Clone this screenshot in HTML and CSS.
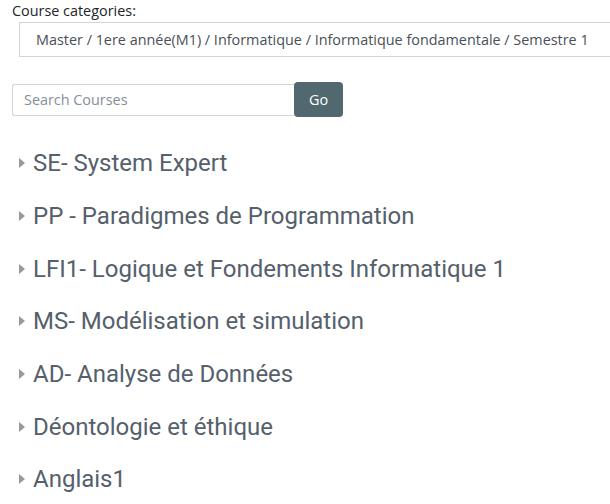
FILE: index.html
```html
<!DOCTYPE html>
<html>
<head>
<meta charset="utf-8">
<link rel="stylesheet" href="styles.css">
</head>
<body>
<div class="page">
  <div class="categories">
    <label class="cat-label">Course categories:</label>
    <div class="select">Master / 1ere année(M1) / Informatique / Informatique fondamentale / Semestre 1</div>
  </div>
  <form class="search">
    <input class="search-input" type="text" placeholder="Search Courses">
    <button class="go" type="button">Go</button>
  </form>
  <ul class="courses">
    <li class="course"><span class="caret"></span><span class="name">SE- System Expert</span></li>
    <li class="course"><span class="caret"></span><span class="name">PP - Paradigmes de Programmation</span></li>
    <li class="course"><span class="caret"></span><span class="name">LFI1- Logique et Fondements Informatique 1</span></li>
    <li class="course"><span class="caret"></span><span class="name">MS- Modélisation et simulation</span></li>
    <li class="course"><span class="caret"></span><span class="name">AD- Analyse de Données</span></li>
    <li class="course"><span class="caret"></span><span class="name">Déontologie et éthique</span></li>
    <li class="course"><span class="caret"></span><span class="name">Anglais1</span></li>
  </ul>
</div>
</body>
</html>
```
FILE: styles.css
```css
html, body {
  margin: 0;
  padding: 0;
  background: #fff;
  overflow: hidden;
}
body {
  font-family: "Open Sans", "Liberation Sans", sans-serif;
  color: #212529;
}
.page {
  padding: 2px 0 0 12px;
}
.categories {
  display: flex;
  flex-direction: column;
}
.cat-label {
  font-size: 14.4px;
  line-height: 18px;
  color: #212529;
}
.select {
  margin: 2px 0 0 7px;
  height: 33px;
  border: 1px solid #ced4da;
  border-right: none;
  box-sizing: content-box;
  display: flex;
  align-items: center;
  padding-left: 16px;
  font-size: 14.4px;
  color: #495057;
  white-space: nowrap;
  width: 700px;
}
.search {
  display: flex;
  align-items: center;
  margin: 25px 0 0 0;
}
.search-input {
  width: 282px;
  height: 32px;
  box-sizing: border-box;
  border: 1px solid #ced4da;
  border-right: none;
  border-radius: 3px 0 0 3px;
  padding: 0 11px;
  font-family: "Open Sans", "Liberation Sans", sans-serif;
  font-size: 14.4px;
  color: #495057;
  outline: none;
}
.search-input::placeholder {
  color: #868e96;
  opacity: 1;
}
.go {
  width: 49px;
  height: 35px;
  border: none;
  border-radius: 4px;
  background: #516870;
  color: #fff;
  font-family: "Open Sans", "Liberation Sans", sans-serif;
  font-size: 14.4px;
  padding: 0;
}
.courses {
  list-style: none;
  margin: 20px 0 0 0;
  padding: 0 0 0 7px;
}
.course {
  display: flex;
  align-items: center;
  height: 52.7px;
}
.caret {
  width: 0;
  height: 0;
  border-top: 5px solid transparent;
  border-bottom: 5px solid transparent;
  border-left: 6px solid #999;
  margin-right: 8px;
}
.name {
  font-family: Roboto, "Liberation Sans", sans-serif;
  font-size: 24px;
  color: #55606b;
  white-space: nowrap;
}
```
